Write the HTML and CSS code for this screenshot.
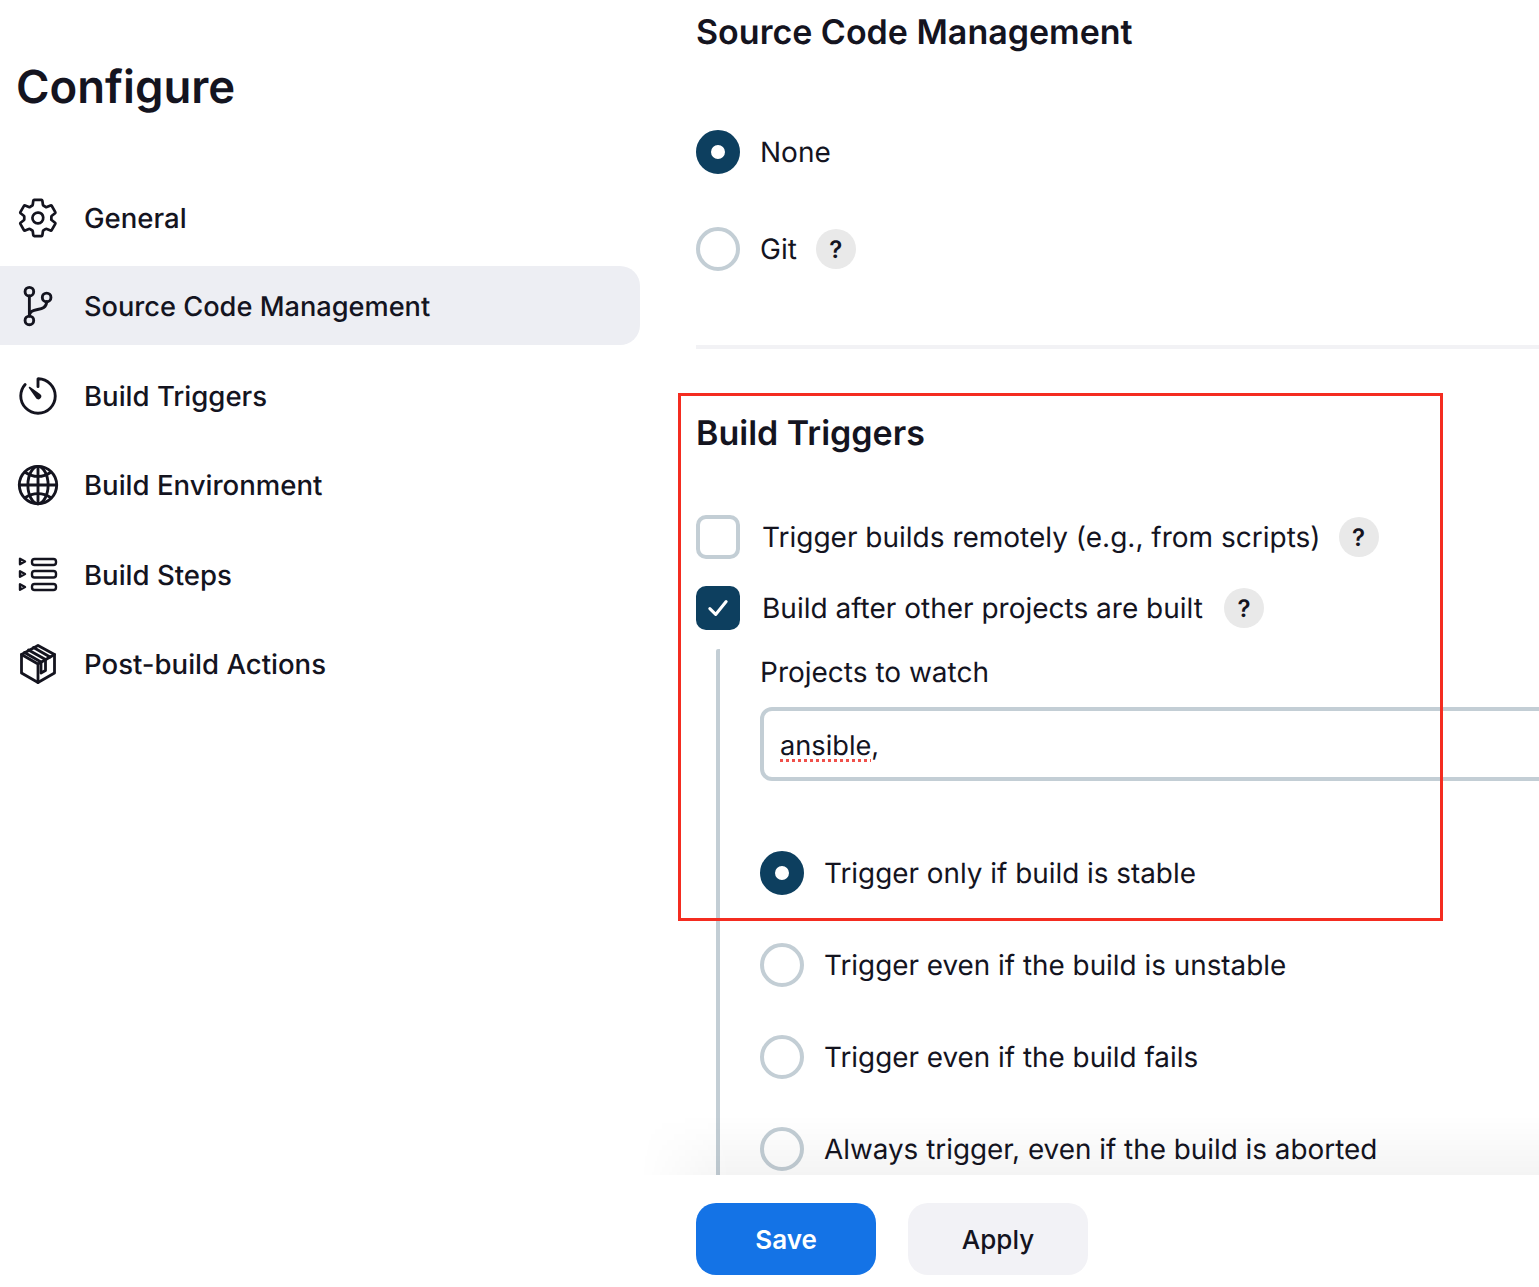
FILE: index.html
```html
<!DOCTYPE html>
<html lang="en">
<head>
    <meta charset="UTF-8">
    <meta name="viewport" content="width=device-width, initial-scale=1.0">
    <title>Configure</title>
    <link rel="stylesheet" href="styles.css">
</head>
<body>
    <div class="page">
        <aside class="sidebar">
            <h1>Configure</h1>
            <nav class="nav">
                <a class="nav-item" href="#general">
                    <svg class="nav-icon" viewBox="-14 -16 544 544"><path d="M262.29 192.31a64 64 0 1057.4 57.4 64.13 64.13 0 00-57.4-57.4zM416.39 256a154.34 154.34 0 01-1.53 20.79l45.21 35.46a10.81 10.81 0 012.45 13.75l-42.77 74a10.81 10.81 0 01-13.14 4.59l-44.9-18.08a16.11 16.11 0 00-15.17 1.75A164.48 164.48 0 01325 400.8a15.94 15.94 0 00-8.82 12.14l-6.73 47.89a11.08 11.08 0 01-10.68 9.17h-85.54a11.11 11.11 0 01-10.69-8.87l-6.72-47.82a16.07 16.07 0 00-9-12.22 155.3 155.3 0 01-21.46-12.57 16 16 0 00-15.11-1.71l-44.89 18.07a10.81 10.81 0 01-13.14-4.58l-42.77-74a10.8 10.8 0 012.45-13.75l38.21-30a16.05 16.05 0 006-14.08c-.36-4.17-.58-8.33-.58-12.5s.21-8.27.58-12.35a16 16 0 00-6.07-13.94l-38.19-30A10.81 10.81 0 0149.48 186l42.77-74a10.81 10.81 0 0113.14-4.59l44.9 18.08a16.11 16.11 0 0015.17-1.75A164.48 164.48 0 01187 111.2a15.94 15.94 0 008.82-12.14l6.73-47.89A11.08 11.08 0 01213.23 42h85.54a11.11 11.11 0 0110.69 8.87l6.72 47.82a16.07 16.07 0 009 12.22 155.3 155.3 0 0121.46 12.57 16 16 0 0015.11 1.71l44.89-18.07a10.81 10.81 0 0113.14 4.58l42.77 74a10.8 10.8 0 01-2.45 13.75l-38.21 30a16.05 16.05 0 00-6.05 14.08c.33 4.14.55 8.3.55 12.47z"/></svg>
                    General
                </a>
                <a class="nav-item active" href="#scm">
                    <svg class="nav-icon" viewBox="0 0 512 512"><circle cx="160" cy="96" r="48"/><circle cx="160" cy="416" r="48"/><path d="M160 368V144"/><circle cx="352" cy="160" r="48"/><path d="M352 208c0 128-192 48-192 160"/></svg>
                    Source Code Management
                </a>
                <a class="nav-item" href="#triggers">
                    <svg class="nav-icon" viewBox="0 0 512 512"><path d="M112.91 128A191.85 191.85 0 0064 254c-1.18 106.35 85.65 193.8 192 194 106.2.2 192-85.83 192-192 0-104.54-83.55-189.61-187.5-192a4.36 4.36 0 00-4.5 4.37V152"/><path class="solid" d="M233.38 278.63l-79-113a8.13 8.13 0 0111.32-11.32l113 79a32.5 32.5 0 01-37.25 53.26 33.21 33.21 0 01-8.07-8.94z"/></svg>
                    Build Triggers
                </a>
                <a class="nav-item" href="#env">
                    <svg class="nav-icon" viewBox="0 0 512 512"><path d="M256 48C141.13 48 48 141.13 48 256s93.13 208 208 208 208-93.13 208-208S370.87 48 256 48z"/><path d="M256 48c-58.07 0-112.67 93.13-112.67 208S197.93 464 256 464s112.67-93.13 112.67-208S314.07 48 256 48z"/><path d="M117.33 117.33c38.24 27.15 86.38 43.34 138.67 43.34s100.43-16.19 138.67-43.34M394.67 394.67c-38.24-27.15-86.38-43.34-138.67-43.34s-100.43 16.19-138.67 43.34"/><path d="M256 48v416M464 256H48"/></svg>
                    Build Environment
                </a>
                <a class="nav-item" href="#steps">
                    <svg class="nav-icon" viewBox="-3 -3 46 46"><g class="steps"><rect x="14" y="4" width="24" height="6" rx="2.600"/><rect x="14" y="16" width="24" height="6.500" rx="2.600"/><rect x="14" y="29" width="24" height="6" rx="2.600"/><path d="M2 3.800v5.400l5-2.700zM2 16.300v5.400l5-2.700zM2 29.300v5.400l5-2.700z"/></g></svg>
                    Build Steps
                </a>
                <a class="nav-item" href="#post">
                    <svg class="nav-icon" viewBox="-3 -3 46 46"><g class="thin"><path d="M20 1.500L36.500 10.500V29L20 38.500 3.500 29V10.500z"/><path d="M3.500 10.500L20 20l16.500-9.500M20 20v18.500"/><path d="M10.500 6l17 9.500v11l-4.500 2.500v-11L6.500 8.500M15.500 3.500l16.500 9.500"/></g></svg>
                    Post-build Actions
                </a>
            </nav>
        </aside>

        <main class="content">
            <section class="scm">
                <h2>Source Code Management</h2>
                <div class="option-list scm-options">
                    <div class="option"><span class="radio checked"></span>None</div>
                    <div class="option"><span class="radio"></span>Git<span class="help">?</span></div>
                </div>
            </section>

            <section class="triggers">
                <h2>Build Triggers</h2>
                <div class="check-row first"><span class="checkbox"></span>Trigger builds remotely (e.g., from scripts)<span class="help">?</span></div>
                <div class="check-row"><span class="checkbox checked"><svg viewBox="0 0 24 24"><path d="M5 12.500l5 5L19 6.500"/></svg></span>Build after other projects are built<span class="help">?</span></div>
                <div class="nested">
                    <label class="field-label">Projects to watch</label>
                    <div class="text-input"><span class="misspelled">ansible</span>,</div>
                    <div class="option-list nested-options">
                        <div class="option"><span class="radio checked"></span>Trigger only if build is stable</div>
                        <div class="option"><span class="radio"></span>Trigger even if the build is unstable</div>
                        <div class="option"><span class="radio"></span>Trigger even if the build fails</div>
                        <div class="option"><span class="radio"></span>Always trigger, even if the build is aborted</div>
                    </div>
                </div>
            </section>
        </main>
    </div>

    <div class="highlight"></div>

    <div class="bottom-bar">
        <button class="btn btn-primary" type="button">Save</button>
        <button class="btn" type="button">Apply</button>
    </div>
</body>
</html>
```

FILE: styles.css
```css
html, body {
    margin: 0;
    padding: 0;
    height: 100%;
    overflow: hidden;
    background: #fff;
}
body {
    position: relative;
    font-family: Inter, "Liberation Sans", sans-serif;
    font-size: 28px;
    color: #14141f;
    text-rendering: geometricPrecision;
}
.page {
    display: grid;
    grid-template-columns: 640px 1fr;
    column-gap: 56px;
    height: 100%;
    overflow: hidden;
}

/* sidebar */
.sidebar h1 {
    margin: 0;
    padding: 58px 0 0 16px;
    font-size: 45.5px;
    line-height: 58px;
    font-weight: 600;
}
.nav {
    display: flex;
    flex-direction: column;
    gap: 10.3px;
    margin-top: 62px;
}
.nav-item {
    display: flex;
    align-items: center;
    gap: 23px;
    height: 79px;
    padding-left: 15px;
    border-radius: 0 20px 20px 0;
    color: #14141f;
    font-size: 27.55px;
    text-decoration: none;
    font-weight: 450;
}
.nav-item.active {
    box-sizing: border-box;
    margin-top: -1px;
    margin-bottom: 1px;
    padding-top: 2px;
    background-color: #edeef3;
    font-size: 27.2px;
    font-weight: 500;
}
.nav-item.active .nav-icon {
    margin-top: -2px;
}
.nav-icon {
    width: 46px;
    height: 46px;
    flex: none;
    fill: none;
    stroke: #14141f;
    stroke-width: 32;
    stroke-linecap: round;
    stroke-linejoin: round;
}
.nav-icon .solid {
    fill: #14141f;
    stroke: none;
}
.nav-icon .thin {
    stroke-width: 2.800;
}
.nav-icon .steps {
    stroke-width: 2.400;
}

/* main column */
.content {
    min-width: 0;
}
.content h2 {
    margin: 0;
    font-size: 34px;
    line-height: 44px;
    font-weight: 600;
}
.scm {
    padding-top: 11px;
    padding-bottom: 74px;
    border-bottom: 4px solid #f2f2f5;
}
.option-list {
    display: flex;
    flex-direction: column;
    gap: 48px;
}
.scm-options {
    margin-top: 75px;
    gap: 53px;
}
.option, .check-row {
    display: flex;
    align-items: center;
    height: 44px;
    white-space: nowrap;
}
.radio {
    flex: none;
    box-sizing: border-box;
    width: 44px;
    height: 44px;
    margin-right: 20px;
    border: 4px solid #c3ced5;
    border-radius: 50%;
    background: #fff;
}
.radio.checked {
    border: 15px solid #0d3f5f;
}
.help {
    display: flex;
    align-items: center;
    justify-content: center;
    width: 40px;
    height: 40px;
    margin-left: 19px;
    border-radius: 50%;
    background-color: #e9e9e9;
    font-size: 24px;
    font-weight: 600;
}

/* build triggers */
.triggers {
    padding-top: 63px;
}
.check-row {
    margin-top: 27px;
}
.check-row .help {
    margin-left: 21px;
}
.check-row.first {
    margin-top: 59px;
}
.check-row.first .help {
    margin-left: 18px;
}
.checkbox {
    flex: none;
    box-sizing: border-box;
    display: flex;
    align-items: center;
    justify-content: center;
    width: 44px;
    height: 44px;
    margin-right: 22px;
    border: 4px solid #c3ced5;
    border-radius: 10px;
    background: #fff;
}
.checkbox.checked {
    border: 0;
    background-color: #0d3f5f;
}
.checkbox svg {
    width: 28px;
    height: 28px;
    fill: none;
    stroke: #fff;
    stroke-width: 2.600;
    stroke-linecap: round;
    stroke-linejoin: round;
}
.nested {
    margin-top: 19px;
    margin-left: 20px;
    padding-left: 40px;
    padding-top: 4px;
    padding-bottom: 80px;
    border-left: 4px solid #c3ced5;
    border-radius: 2px;
}
.field-label {
    display: block;
    line-height: 38px;
}
.text-input {
    box-sizing: border-box;
    width: 900px;
    height: 74px;
    margin-top: 16px;
    padding-left: 16px;
    padding-top: 2px;
    border: 4px solid #c3ced5;
    border-radius: 12px;
    font-size: 27.2px;
    line-height: 66px;
}
.misspelled {
    text-decoration: underline dotted #f0504a 3px;
    text-underline-offset: 4px;
}
.nested-options {
    margin-top: 70px;
    font-size: 27.85px;
}

/* overlays */
.highlight {
    position: absolute;
    left: 678px;
    top: 393px;
    width: 759px;
    height: 522px;
    border: 3px solid #f42c20;
    pointer-events: none;
}
.bottom-bar {
    position: absolute;
    left: 640px;
    right: 0;
    top: 1175px;
    bottom: 0;
    display: flex;
    gap: 32px;
    padding: 28px 0 0 56px;
    background: #fff;
}
.bottom-bar::before {
    content: "";
    position: absolute;
    left: 0;
    right: 0;
    top: -60px;
    height: 60px;
    background: linear-gradient(to bottom, rgba(0, 0, 0, 0), rgba(0, 0, 0, 0.045));
    -webkit-mask-image: linear-gradient(to right, transparent, #000 90px);
    mask-image: linear-gradient(to right, transparent, #000 90px);
}
.btn {
    width: 180px;
    height: 72px;
    border: none;
    border-radius: 20px;
    background-color: #f2f2f6;
    color: #14141f;
    font-family: inherit;
    font-size: 26px;
    font-weight: 450;
    cursor: pointer;
}
.btn-primary {
    background-color: #1473e6;
    color: #fff;
    font-weight: 600;
}
```
